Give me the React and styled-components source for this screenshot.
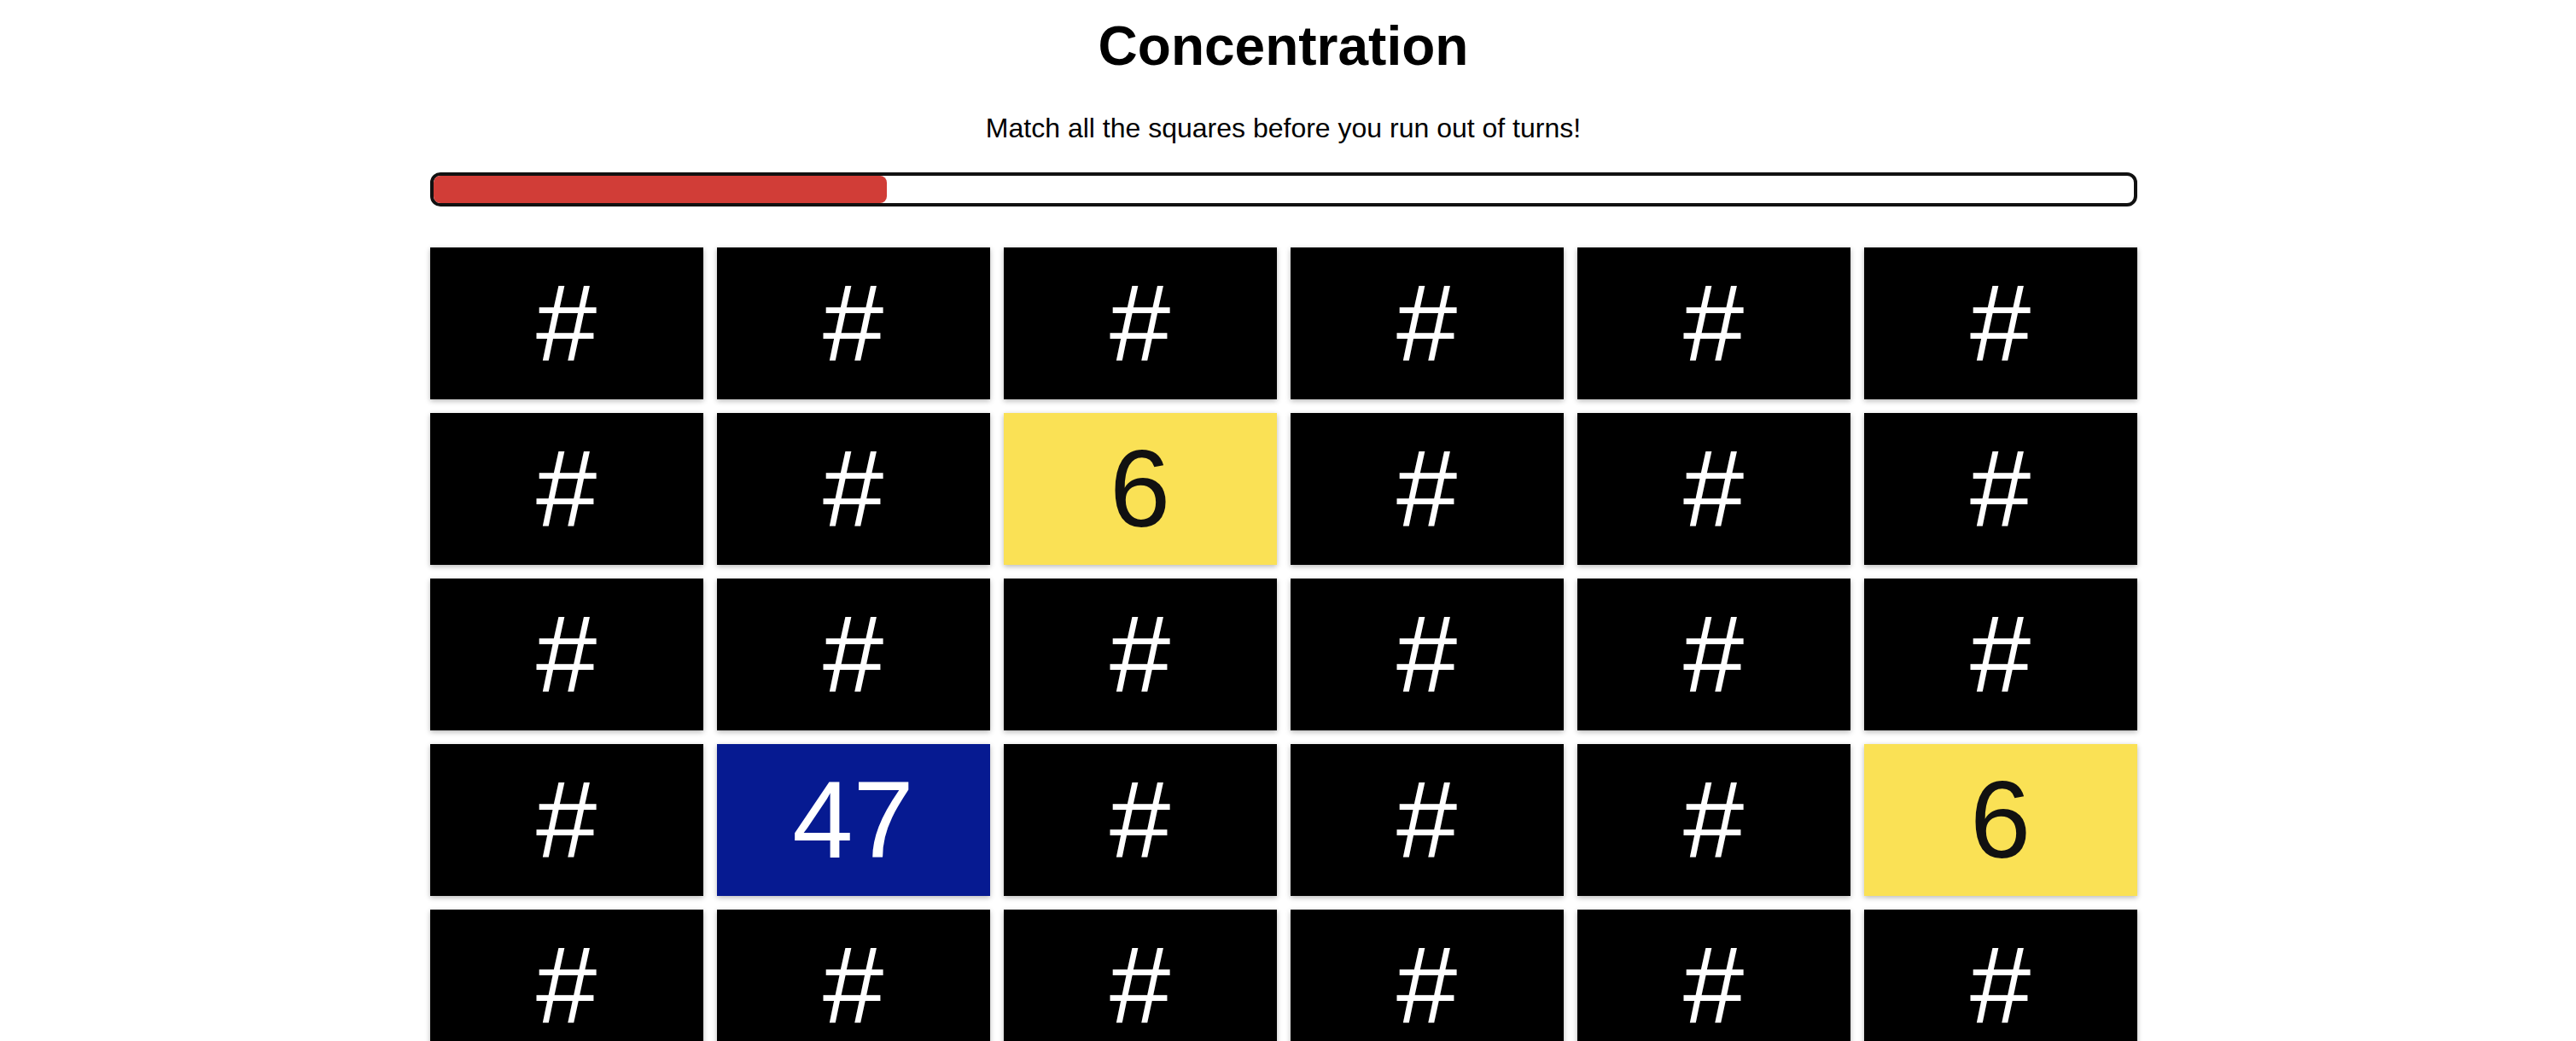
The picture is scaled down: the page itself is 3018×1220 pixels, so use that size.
import React from 'react';
import styled, { createGlobalStyle } from 'styled-components';

const GlobalStyle = createGlobalStyle`
  html, body {
    margin: 0;
    padding: 0;
    background: #fff;
    overflow: hidden;
  }
  body {
    font-family: "Liberation Sans", Arial, Helvetica, sans-serif;
    color: #000;
  }
`;

const Page = styled.div`
  display: flex;
  flex-direction: column;
  align-items: center;
  padding: 17px 11px 0 0;
`;

const Title = styled.h1`
  margin: 0;
  font-size: 64px;
  line-height: 74px;
  font-weight: bold;
`;

const Subtitle = styled.p`
  margin: 41px 0 33px;
  font-size: 32px;
  line-height: 37px;
`;

const ProgressTrack = styled.div`
  box-sizing: border-box;
  width: 2000px;
  height: 40px;
  border: 4px solid #111;
  border-radius: 12px;
  background: #fff;
  margin-bottom: 48px;
`;

const ProgressFill = styled.div`
  height: 100%;
  background: #d13d37;
  border-radius: 8px;
`;

const Board = styled.div`
  display: grid;
  grid-template-columns: repeat(6, 320px);
  gap: 16px;
  width: 2000px;
`;

const tileColors = {
  hidden: { bg: '#000', fg: '#fff' },
  flipped: { bg: '#fae155', fg: '#111' },
  matched: { bg: '#061a91', fg: '#fff' },
};

const Tile = styled.div`
  height: 178px;
  display: flex;
  align-items: center;
  justify-content: center;
  font-size: 128px;
  line-height: 1;
  background: ${p => tileColors[p.$state].bg};
  color: ${p => tileColors[p.$state].fg};
  box-shadow: 0 2px 6px rgba(0, 0, 0, 0.28);
  cursor: pointer;
  user-select: none;
`;

// which squares are face up right now
const faceUp = {
  8: { state: 'flipped', value: 6 },
  19: { state: 'matched', value: 47 },
  23: { state: 'flipped', value: 6 },
};

const squares = Array.from({ length: 36 }, (_, i) => faceUp[i] || { state: 'hidden' });

const turnsUsed = 8;
const maxTurns = 30;

export default function App() {
  return (
    <>
      <GlobalStyle />
      <Page>
        <Title>Concentration</Title>
        <Subtitle>Match all the squares before you run out of turns!</Subtitle>
        <ProgressTrack>
          <ProgressFill style={{ width: `${(turnsUsed / maxTurns) * 100}%` }} />
        </ProgressTrack>
        <Board>
          {squares.map((sq, i) => (
            <Tile key={i} $state={sq.state}>
              {sq.state === 'hidden' ? '#' : sq.value}
            </Tile>
          ))}
        </Board>
      </Page>
    </>
  );
}
